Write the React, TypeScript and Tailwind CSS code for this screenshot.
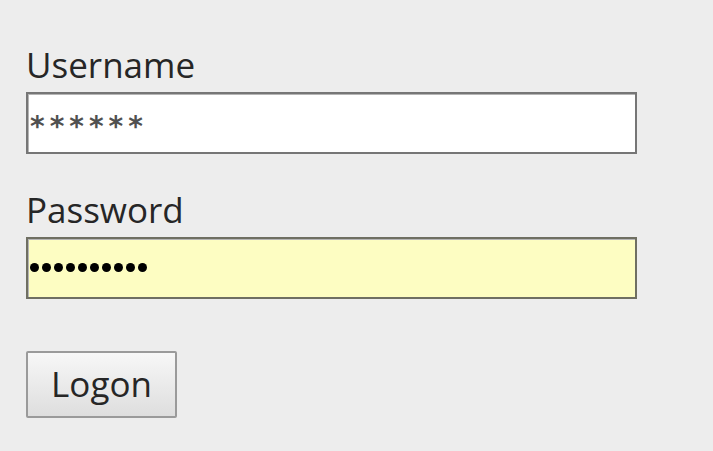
import React from 'react';

const Field: React.FC<{ yellow?: boolean; children: React.ReactNode }> = ({ yellow, children }) => (
  <div
    className={`w-[611px] h-[62px] border-2 shadow-[inset_1px_1px_0_#b5b5b5] flex items-start pl-[2px] pt-[14px] ${
      yellow ? 'bg-[#fdfdc2] border-[#6f6f62]' : 'bg-white border-[#767676]'
    }`}
  >
    {children}
  </div>
);

const App: React.FC = () => {
  return (
    <div className="w-[713px] h-[451px] bg-[#ededed] pl-[26px] pt-[45px] font-['Open_Sans',sans-serif] text-[#262626] overflow-hidden">
      <label className="block text-[35px] leading-[40px] mb-[7px]">Username</label>
      <Field>
        <span className="font-['DejaVu_Sans',sans-serif] font-bold text-[28px] leading-[34px] tracking-[5px] text-[#505050] mt-[2px]">******</span>
      </Field>

      <label className="block text-[35px] leading-[40px] mt-[36px] mb-[7px]">Password</label>
      <Field yellow>
        <div className="flex gap-[3px] mt-[10px]">
          {Array.from({ length: 10 }).map((_, i) => (
            <span key={i} className="w-[9px] h-[9px] rounded-full bg-black" />
          ))}
        </div>
      </Field>

      <button className="mt-[52px] w-[151px] h-[67px] border-2 border-[#9a9a9a] rounded-[2px] bg-gradient-to-b from-[#f7f7f7] to-[#dedede] text-[35px] leading-none text-[#262626] pb-[2px]">
        Logon
      </button>
    </div>
  );
};

export default App;
